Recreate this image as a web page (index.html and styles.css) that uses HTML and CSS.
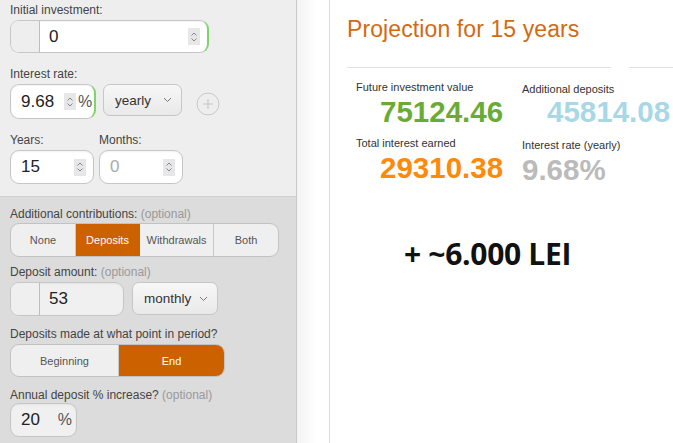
FILE: index.html
```html
<!DOCTYPE html>
<html>
<head>
<meta charset="utf-8">
<link rel="stylesheet" href="styles.css">
</head>
<body>
<div class="page">
  <aside class="sidebar">
    <section class="sec sec-top">
      <div class="field">
        <div class="label">Initial investment:</div>
        <div class="input w-initial focus">
          <span class="addon"></span>
          <span class="val">0</span>
          <span class="spin"><svg width="8" height="12" viewBox="0 0 8 12"><path d="M1.5 4.5 L4 2 L6.5 4.5 M1.5 7.5 L4 10 L6.5 7.5" fill="none" stroke="#888" stroke-width="1"/></svg></span>
        </div>
      </div>
      <div class="field">
        <div class="label">Interest rate:</div>
        <div class="row">
          <div class="input w-rate focus">
            <span class="val">9.68</span>
            <span class="spin"><svg width="8" height="12" viewBox="0 0 8 12"><path d="M1.5 4.5 L4 2 L6.5 4.5 M1.5 7.5 L4 10 L6.5 7.5" fill="none" stroke="#888" stroke-width="1"/></svg></span>
            <span class="pct">%</span>
          </div>
          <div class="select w-yearly"><span>yearly</span><svg width="9" height="6" viewBox="0 0 9 6"><path d="M1 1 L4.5 4.5 L8 1" fill="none" stroke="#777" stroke-width="1"/></svg></div>
          <div class="plus"><svg width="24" height="24" viewBox="0 0 24 24"><circle cx="12" cy="12" r="11" fill="none" stroke="#c8c8c8" stroke-width="1"/><path d="M12 7 V17 M7 12 H17" stroke="#c8c8c8" stroke-width="1.2"/></svg></div>
        </div>
      </div>
      <div class="row years-row">
        <div class="field">
          <div class="label">Years:</div>
          <div class="input w-years">
            <span class="val">15</span>
            <span class="spin"><svg width="8" height="12" viewBox="0 0 8 12"><path d="M1.5 4.5 L4 2 L6.5 4.5 M1.5 7.5 L4 10 L6.5 7.5" fill="none" stroke="#888" stroke-width="1"/></svg></span>
          </div>
        </div>
        <div class="field">
          <div class="label">Months:</div>
          <div class="input w-months">
            <span class="val muted">0</span>
            <span class="spin"><svg width="8" height="12" viewBox="0 0 8 12"><path d="M1.5 4.5 L4 2 L6.5 4.5 M1.5 7.5 L4 10 L6.5 7.5" fill="none" stroke="#888" stroke-width="1"/></svg></span>
          </div>
        </div>
      </div>
    </section>
    <section class="sec sec-bottom">
      <div class="field">
        <div class="label">Additional contributions: <span class="opt">(optional)</span></div>
        <div class="seg seg-contrib">
          <span class="b b-none">None</span>
          <span class="b b-dep active">Deposits</span>
          <span class="b b-wd">Withdrawals</span>
          <span class="b b-both">Both</span>
        </div>
      </div>
      <div class="field">
        <div class="label">Deposit amount: <span class="opt">(optional)</span></div>
        <div class="row">
          <div class="input w-deposit grey">
            <span class="addon"></span>
            <span class="val">53</span>
          </div>
          <div class="select w-monthly"><span>monthly</span><svg width="9" height="6" viewBox="0 0 9 6"><path d="M1 1 L4.5 4.5 L8 1" fill="none" stroke="#777" stroke-width="1"/></svg></div>
        </div>
      </div>
      <div class="field">
        <div class="label">Deposits made at what point in period?</div>
        <div class="seg seg-point">
          <span class="b b-beg">Beginning</span>
          <span class="b b-end active">End</span>
        </div>
      </div>
      <div class="field">
        <div class="label">Annual deposit % increase? <span class="opt">(optional)</span></div>
        <div class="input w-annual grey">
          <span class="val">20</span>
          <span class="pct">%</span>
        </div>
      </div>
    </section>
  </aside>
  <div class="gutter"></div>
  <main class="main">
    <h1 class="title">Projection for 15 years</h1>
    <div class="rules"><span class="rule r1"></span><span class="rule r2"></span></div>
    <div class="stats">
      <div class="stat">
        <div class="slabel">Future investment value</div>
        <div class="snum green">75124.46</div>
      </div>
      <div class="stat">
        <div class="slabel">Additional deposits</div>
        <div class="snum blue">45814.08</div>
      </div>
      <div class="stat">
        <div class="slabel">Total interest earned</div>
        <div class="snum orange">29310.38</div>
      </div>
      <div class="stat">
        <div class="slabel">Interest rate (yearly)</div>
        <div class="snum gray">9.68%</div>
      </div>
    </div>
    <div class="note">+ ~6.000 LEI</div>
  </main>
</div>
</body>
</html>
```
FILE: styles.css
```css
* { box-sizing: border-box; }
html, body { margin: 0; padding: 0; background: #fff; }
body { font-family: "Liberation Sans", Arial, sans-serif; color: #444; }
.page { display: flex; width: 673px; height: 443px; overflow: hidden; }

.sidebar { width: 297px; flex: none; border-right: 1px solid #c9c9c9; display: flex; flex-direction: column; }
.sec { padding: 0 10px; }
.sec-top { background: #eeeeee; padding-top: 2px; height: 197px; flex: none; border-bottom: 1px solid #cfcfcf; }
.sec-bottom { background: #dcdcdc; flex: 1; padding-top: 9px; }

.label { font-size: 12px; line-height: 16px; color: #444; height: 18px; }
.label .opt { color: #999; }
.field { margin-bottom: 13px; }
.row { display: flex; align-items: flex-start; }
.years-row { gap: 5px; }
.years-row .field { margin-bottom: 0; }

.input { height: 34px; background: #fff; border: 1px solid #c6c6c6; border-radius: 9px; display: flex; align-items: center; position: relative; box-shadow: inset 0 1px 2px rgba(0,0,0,0.05); }
.input.focus { border-right: 2px solid #7fd46b; }
.input.grey { background: #f0f0f0; }
.addon { width: 29px; align-self: stretch; background: #eeeeee; border-right: 1px solid #bdbdbd; border-radius: 8px 0 0 8px; flex: none; }
.input.grey .addon { background: #efefef; }
.val { font-size: 17px; color: #222; padding-left: 10px; flex: 1; }
.addon + .val { padding-left: 9px; }
.val.muted { color: #aaa; }
.spin { width: 12px; height: 17px; background: #e7e7ea; display: flex; align-items: center; justify-content: center; margin-right: 7px; flex: none; }
.pct { font-size: 16px; color: #555; margin-right: 4px; }
.w-initial { width: 199px; height: 33px; }
.w-rate { width: 86px; height: 35px; }
.w-rate .val { flex: none; width: 53px; padding-left: 10px; }
.w-rate .spin { margin-right: 2px; }
.w-years { width: 84px; }
.w-months { width: 84px; }
.w-deposit { width: 114px; }
.w-annual { width: 67px; }
.w-annual .val { padding-left: 10px; }
.w-annual .pct { margin-right: 4px; color: #555; }

.select { height: 33px; border: 1px solid #c6c6c6; border-radius: 7px; background: linear-gradient(#f7f7f7, #e9e9e9); display: flex; align-items: center; justify-content: space-between; padding: 0 9px 0 11px; font-size: 13.5px; color: #333; margin-left: 7px; }
.w-yearly { width: 79px; height: 32px; }
.w-monthly { width: 86px; margin-left: 8px; }
.plus { margin-left: 14px; margin-top: 8px; display: flex; }

.seg { display: flex; height: 34px; border: 1px solid #c2c2c2; border-radius: 9px; overflow: hidden; background: #efefef; }
.seg .b { display: flex; align-items: center; justify-content: center; font-size: 11px; color: #555; border-right: 1px solid #c8c8c8; }
.seg .b:last-child { border-right: 0; }
.seg .b.active { background: #cc6100; color: #fff; border-right-color: #cc6100; }
.seg-contrib { width: 269px; }
.b-none { width: 65px; }
.b-dep { width: 64px; }
.b-wd { width: 74px; }
.b-both { flex: 1; }
.seg-point { width: 215px; height: 33px; }
.b-beg { width: 108px; }
.b-end { flex: 1; }
.sec-bottom .field:nth-child(1) { margin-bottom: 7px; }
.sec-bottom .field:nth-child(2) { margin-bottom: 10px; }
.sec-bottom .field:nth-child(3) { margin-bottom: 10px; }
.sec-bottom .field:nth-child(1) .label { height: 17px; }
.sec-bottom .field:nth-child(2) .label { height: 18px; }
.sec-bottom .field:nth-child(3) .label { height: 18px; }
.sec-bottom .field:nth-child(4) .label { height: 16px; }

.gutter { width: 32px; flex: none; background: linear-gradient(to right, #f3f3f3, #ffffff 60%); }
.main { flex: 1; border-left: 1px solid #dddddd; padding-left: 17px; }
.title { margin: 15px 0 0; font-weight: normal; font-size: 23px; color: #d26a12; line-height: 28px; letter-spacing: 0.1px; }
.rules { display: flex; margin-top: 24px; height: 1px; }
.rule { height: 1px; background: #e2e2e2; }
.r1 { width: 264px; }
.r2 { width: 60px; margin-left: 18px; }
.stats { display: grid; grid-template-columns: 166px 160px; padding-left: 9px; margin-top: 13px; row-gap: 8px; }
.slabel { font-size: 11px; color: #333; line-height: 13px; white-space: nowrap; }
.stat:nth-child(2) .slabel { margin-top: 2px; }
.stat:nth-child(4) .slabel { margin-top: 2px; }
.snum { font-weight: bold; font-size: 29.5px; line-height: 34px; margin-top: 1px; white-space: nowrap; }
.stat:nth-child(1) .snum, .stat:nth-child(3) .snum { padding-left: 24px; }
.stat:nth-child(2) .snum { padding-left: 25px; margin-top: -1px; }
.green { color: #6aab35; }
.blue { color: #a8d7e6; }
.orange { color: #ff8a0a; }
.gray { color: #bbbbbb; }
.note { margin-top: 49px; margin-left: 57px; font-family: "Open Sans", sans-serif; font-weight: bold; font-size: 30px; line-height: 36px; color: #111; letter-spacing: -0.3px; }
```
